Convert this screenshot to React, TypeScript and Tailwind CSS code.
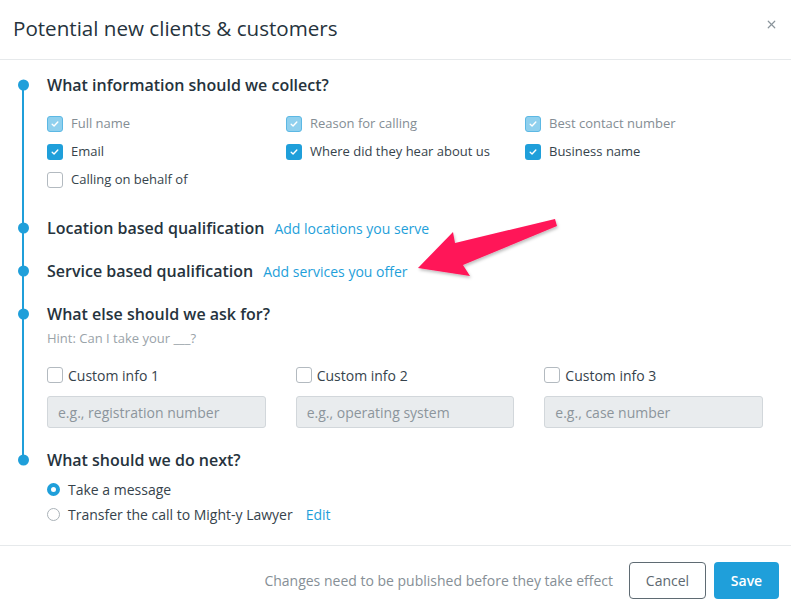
import { X } from "lucide-react";

const font = { fontFamily: '"Open Sans", "Noto Sans", sans-serif' };

function CheckMark() {
  return (
    <svg viewBox="0 0 16 16" className="w-[10px] h-[10px]">
      <path d="M3.5 8.5 L6.5 11.2 L12.5 4.8" fill="none" stroke="white" strokeWidth="2.2" strokeLinecap="round" strokeLinejoin="round" />
    </svg>
  );
}

function Checkbox({ state }: { state: "off" | "on" | "locked" }) {
  if (state === "on")
    return (
      <span className="w-4 h-4 rounded-[3px] bg-[#1f9fda] flex items-center justify-center shrink-0">
        <CheckMark />
      </span>
    );
  if (state === "locked")
    return (
      <span className="w-4 h-4 rounded-[3px] bg-[#8fd0ee] border border-[#5cb8e4] flex items-center justify-center shrink-0">
        <CheckMark />
      </span>
    );
  return <span className="w-4 h-4 rounded-[3px] bg-white border border-[#b3bac0] shrink-0" />;
}

function Dot() {
  return <span className="absolute left-[-29px] top-1/2 -translate-y-1/2 w-[11px] h-[11px] rounded-full bg-[#1f9fda]" />;
}

function Heading({ children, link }: { children: React.ReactNode; link?: string }) {
  return (
    <div className="relative flex items-baseline h-6">
      <Dot />
      <span className="text-[16px] font-semibold text-[#26333d] leading-6">{children}</span>
      {link && <a className="ml-[10px] text-[14px] text-[#1f9fda] leading-6">{link}</a>}
    </div>
  );
}

const collect: { label: string; state: "off" | "on" | "locked" }[] = [
  { label: "Full name", state: "locked" },
  { label: "Reason for calling", state: "locked" },
  { label: "Best contact number", state: "locked" },
  { label: "Email", state: "on" },
  { label: "Where did they hear about us", state: "on" },
  { label: "Business name", state: "on" },
  { label: "Calling on behalf of", state: "off" },
];

const custom = [
  { label: "Custom info 1", ph: "e.g., registration number" },
  { label: "Custom info 2", ph: "e.g., operating system" },
  { label: "Custom info 3", ph: "e.g., case number" },
];

export default function App() {
  return (
    <div className="w-[791px] h-[611px] bg-white relative overflow-hidden" style={font}>
      {/* Header */}
      <div className="h-[60px] border-b border-[#e6e9eb] flex items-center justify-between pl-[13px] pr-[13px]">
        <h2 className="text-[20.6px] text-[#26333d] leading-7 -mt-[3px]">Potential new clients &amp; customers</h2>
        <X className="w-[13px] h-[13px] text-[#8a949b] -mt-[10px]" strokeWidth={2.2} />
      </div>

      {/* Body */}
      <div className="relative pl-[47px] pr-[28px] pt-[13px] pb-[18px]">
        <span className="absolute left-[22px] top-[25px] h-[376px] w-[2px] bg-[#1f9fda]" />

        <Heading>What information should we collect?</Heading>
        <div className="grid grid-cols-[239px_239px_1fr] mt-[13px]">
          {collect.map((c) => (
            <label key={c.label} className="h-7 flex items-center gap-2">
              <Checkbox state={c.state} />
              <span className={`text-[13px] ${c.state === "locked" ? "text-[#848d94]" : "text-[#36434c]"}`}>{c.label}</span>
            </label>
          ))}
        </div>

        <div className="mt-[22px]">
          <Heading link="Add locations you serve">Location based qualification</Heading>
        </div>
        <div className="mt-[19px]">
          <Heading link="Add services you offer">Service based qualification</Heading>
        </div>
        <div className="mt-[19px]">
          <Heading>What else should we ask for?</Heading>
        </div>
        <p className="text-[13px] text-[#9aa3a9] leading-[18px] mt-[3px]">Hint: Can I take your ___?</p>

        <div className="grid grid-cols-3 gap-x-[30px] mt-[18px]">
          {custom.map((c) => (
            <div key={c.label} className="flex flex-col">
              <label className="h-5 flex items-center gap-[5px]">
                <Checkbox state="off" />
                <span className="text-[14px] text-[#36434c]">{c.label}</span>
              </label>
              <div className="mt-[11px] h-[32px] rounded-[3px] bg-[#e9ecee] border border-[#d2d7db] flex items-center px-[10px] text-[14px] text-[#8c959c]">
                {c.ph}
              </div>
            </div>
          ))}
        </div>

        <div className="mt-[20px]">
          <Heading>What should we do next?</Heading>
        </div>
        <div className="mt-[5px] flex flex-col">
          <label className="h-[25px] flex items-center gap-[8px]">
            <span className="w-[13px] h-[13px] rounded-full border-[4px] border-[#1f9fda] bg-white" />
            <span className="text-[14px] text-[#36434c]">Take a message</span>
          </label>
          <label className="h-[25px] flex items-center gap-[8px]">
            <span className="w-[13px] h-[13px] rounded-full border border-[#aab2b8] bg-white" />
            <span className="text-[14px] text-[#36434c]">Transfer the call to Might-y Lawyer</span>
            <a className="ml-[5px] text-[14px] text-[#1f9fda]">Edit</a>
          </label>
        </div>
      </div>

      {/* Footer */}
      <div className="border-t border-[#e6e9eb] h-[65px] flex items-center justify-end pr-[12px] pt-[4px] gap-[8px]">
        <span className="text-[14px] text-[#868f96] mr-[8px]">Changes need to be published before they take effect</span>
        <button className="h-[37px] w-[77px] rounded-[4px] border border-[#5f6b73] text-[14px] text-[#5d6870] bg-white">Cancel</button>
        <button className="h-[37px] w-[65px] rounded-[4px] bg-[#1f9fda] text-[14px] text-white font-semibold">Save</button>
      </div>

      {/* Annotation arrow */}
      <svg className="absolute left-0 top-0 pointer-events-none" width="791" height="611">
        <defs>
          <filter id="sh" x="-10%" y="-10%" width="120%" height="130%">
            <feDropShadow dx="1" dy="2" stdDeviation="1.5" floodColor="#000" floodOpacity="0.25" />
          </filter>
        </defs>
        <polygon
          points="555,219 557,226 463,265 470,276 418,268 453,232 455,243"
          fill="#ff1559"
          filter="url(#sh)"
        />
      </svg>
    </div>
  );
}
